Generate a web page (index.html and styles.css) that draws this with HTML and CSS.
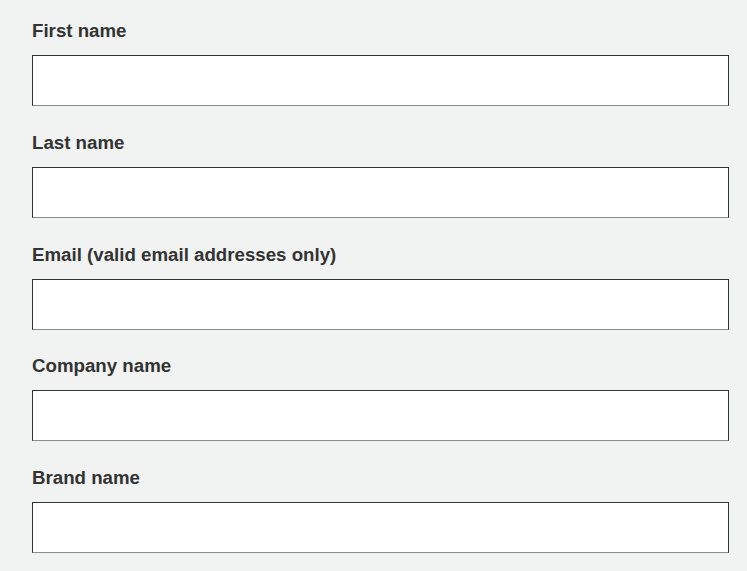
FILE: index.html
```html
<!DOCTYPE html>
<html lang="en">
<head>
  <meta charset="UTF-8" />
  <title>Sign up</title>
  <link rel="stylesheet" href="styles.css">
</head>
<body>
  <form class="signup-form">
    <div class="field">
      <label for="first-name">First name</label>
      <input type="text" id="first-name" />
    </div>
    <div class="field">
      <label for="last-name">Last name</label>
      <input type="text" id="last-name" />
    </div>
    <div class="field">
      <label for="email">Email (valid email addresses only)</label>
      <input type="email" id="email" />
    </div>
    <div class="field">
      <label for="company">Company name</label>
      <input type="text" id="company" />
    </div>
    <div class="field">
      <label for="brand">Brand name</label>
      <input type="text" id="brand" />
    </div>
  </form>
  <div class="bottom-bar"></div>
</body>
</html>
```

FILE: styles.css
```css
body {
  font-family: "Liberation Sans", Arial, sans-serif;
  background-color: #f1f3f3;
  margin: 0;
  height: 571px;
  overflow: hidden;
  display: flex;
  flex-direction: column;
}

.signup-form {
  flex: 1;
  padding: 20px 18px 0 32px;
}

.field {
  display: flex;
  flex-direction: column;
  margin-bottom: 25.75px;
}

.field label {
  font-size: 18.7px;
  line-height: 22px;
  font-weight: bold;
  color: #333;
  margin-bottom: 13px;
}

.field input {
  box-sizing: border-box;
  height: 51px;
  width: 697px;
  margin: 0;
  background: #fff;
  border: 1px solid #333;
  border-bottom-color: #8a8a8a;
  border-radius: 0;
  font-size: 16px;
  padding: 0 10px;
  outline: none;
}

.bottom-bar {
  height: 2px;
  background-color: #c8d3dd;
}
```
